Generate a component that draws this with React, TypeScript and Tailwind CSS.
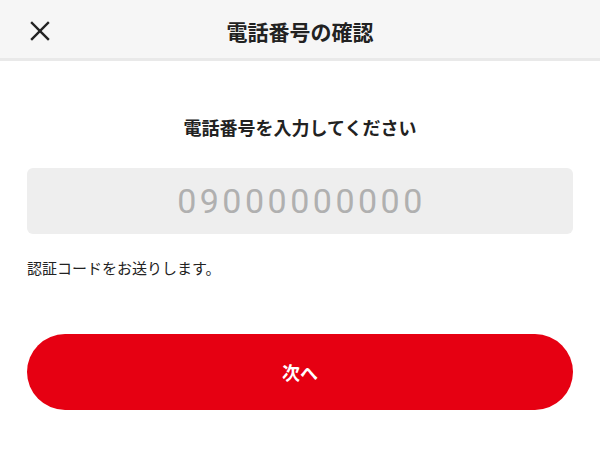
import React from "react";

export default function App() {
  return (
    <div
      className="w-[600px] h-[460px] bg-white overflow-hidden"
      style={{ fontFamily: '"Noto Sans CJK JP", "Noto Sans", sans-serif' }}
    >
      <header className="relative h-[61px] bg-[#f6f6f6] border-b-[3px] border-[#e9e9e9] flex items-center justify-center">
        <button className="absolute left-[30px] top-[21px] w-[20px] h-[20px] flex items-center justify-center">
          <svg width="20" height="20" viewBox="0 0 20 20" fill="none" stroke="#222" strokeWidth="2.4" strokeLinecap="square">
            <line x1="2" y1="2" x2="18" y2="18" />
            <line x1="18" y1="2" x2="2" y2="18" />
          </svg>
        </button>
        <h1 className="text-[21px] font-bold text-[#222] leading-none pt-[4px]">電話番号の確認</h1>
      </header>
      <main className="px-[27px] flex flex-col">
        <p className="mt-[53px] text-center text-[18px] leading-[27px] font-bold text-[#222]">
          電話番号を入力してください
        </p>
        <div className="mt-[27px] h-[66px] rounded-[6px] bg-[#eeeeee] flex items-center justify-center">
          <span
            className="text-[34px] font-normal text-[#b0b0b0] tracking-[3.5px] pl-[3px] leading-none"
            style={{ fontFamily: 'Roboto, "Noto Sans", sans-serif' }}
          >
            09000000000
          </span>
        </div>
        <p className="mt-[23px] text-[15px] leading-[22px] text-[#222]">認証コードをお送りします。</p>
        <button className="mt-[55px] h-[76px] rounded-full bg-[#e60012] flex items-center justify-center">
          <span className="text-white text-[18px] font-bold">次へ</span>
        </button>
      </main>
    </div>
  );
}
